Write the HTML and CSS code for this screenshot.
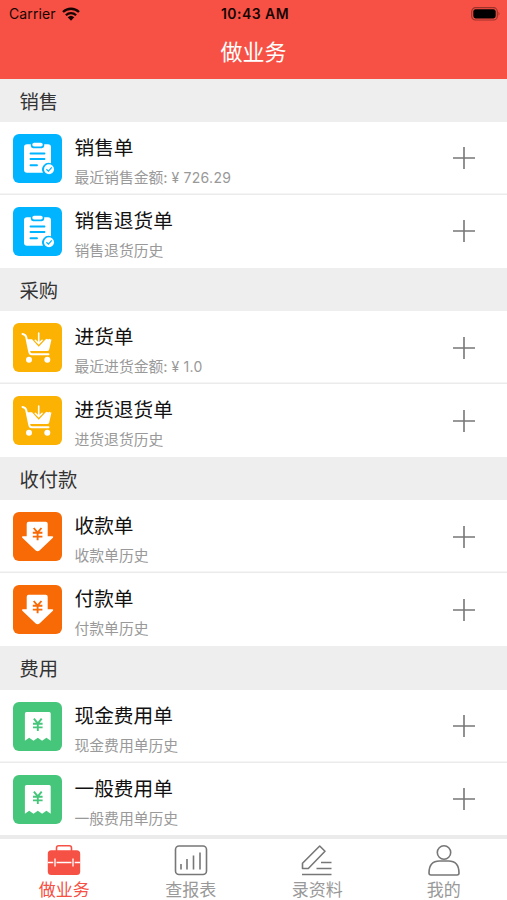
FILE: index.html
```
<!DOCTYPE html>
<html lang="zh-CN">
<head>
    <meta charset="UTF-8">
    <meta name="viewport" content="width=device-width, initial-scale=1.0">
    <title>做业务</title>
    <link rel="stylesheet" href="styles.css">
</head>
<body>
    <!-- shared icons -->
    <svg class="sprite" width="0" height="0">
        <symbol id="order" viewBox="0 0 49 49">
            <path fill="#fff" d="M14 10.3h3.800v1.500q0 2.400 2.400 2.400h8.600q2.400 0 2.400-2.400v-1.500H35q3 0 3 3V29.200a6.600 6.600 0 0 0-8 9.500H14q-3 0-3-3V13.300q0-3 3-3z"/>
            <rect x="19.300" y="8.800" width="10.400" height="3.700" rx="1.800" fill="#fff"/>
            <path d="M17.500 19.500h14M17.500 25h14M17.500 31.300h6.500" fill="none" stroke="#00b4ff" stroke-width="1.900" stroke-linecap="round"/>
            <circle cx="36" cy="35.200" r="5" fill="#fff"/>
            <path d="M33.400 35.200l2 1.900 3.400-3.700" fill="none" stroke="#00b4ff" stroke-width="1.200"/>
        </symbol>
        <symbol id="cart" viewBox="0 0 49 49">
            <path d="M9.500 11q3 .5 3.700 3l3 14.500q.5 2.700 2.500 2.700H35.500" fill="none" stroke="#fff" stroke-width="2" stroke-linecap="round"/>
            <path fill="#fff" d="M13.500 16.200h5.500l6.700 7.600 6.800-7.400 1.300-.7 1.300.8 1.300-.8 1 .8h1.100l-2.300 10q-.4 1.600-2 1.600H16z"/>
            <path d="M25.700 10v10M22.300 17.300l3.400 3.400 3.400-3.400" fill="none" stroke="#fff" stroke-width="1.600" stroke-linecap="round"/>
            <circle cx="16" cy="36.800" r="3" fill="#fff"/>
            <circle cx="34.300" cy="36.800" r="3" fill="#fff"/>
        </symbol>
        <symbol id="pay" viewBox="0 0 49 49">
            <path fill="#fff" d="M15.700 9.700h17q2 0 2 2V24.300h4.600q1.700.3.600 1.500L26.500 38.400q-1.900 1.500-3.800 0L9.300 25.800q-1.100-1.200.6-1.500h3.800V11.700q0-2 2-2z"/>
            <path d="M20.700 16l3.900 4.600 3.900-4.600M19.800 20.800h9.600M19.800 24.600h9.600M24.600 20.600v7.600" fill="none" stroke="#f86a05" stroke-width="1.900"/>
        </symbol>
        <symbol id="receipt" viewBox="0 0 49 49">
            <path fill="#fff" d="M13.500 10h22.700q1.500 0 1.500 1.500v27.300l-4.300-3-4.300 3-4.300-3-4.300 3-4.300-3-4.300 3V11.500q0-1.500 1.600-1.500z"/>
            <path d="M20.900 16.700l3.900 4.700 3.900-4.700M20 21.700h9.600M20 25.400h9.600M24.800 21.400v7.600" fill="none" stroke="#46c67b" stroke-width="1.900"/>
        </symbol>
        <symbol id="plus" viewBox="0 0 22 22">
            <path d="M0 11h22M11 0v22" stroke="#777" stroke-width="1.600"/>
        </symbol>
    </svg>

    <header class="header">
        <div class="status-bar">
            <div class="carrier">
                <span>Carrier</span>
                <svg class="wifi" viewBox="0 0 18 14">
                    <path d="M1 5a11.500 11.500 0 0 1 16 0M3.900 8.200a7.300 7.300 0 0 1 10.200 0" fill="none" stroke="#170504" stroke-width="2.300"/>
                    <path d="M5.700 10.200a4.800 4.800 0 0 1 6.600 0L9 13.700z" fill="#170504"/>
                </svg>
            </div>
            <span class="time">10:43 AM</span>
            <svg class="battery" viewBox="0 0 30 14">
                <rect x=".700" y=".700" width="25.600" height="12.300" rx="3.800" fill="none" stroke="#9c332b" stroke-width="1.200"/>
                <rect x="2.300" y="2.300" width="22.400" height="9.100" rx="2.300"/>
                <path d="M27.500 4.800q2 2 0 4z" fill="#9c332b"/>
            </svg>
        </div>
        <h1 class="title">做业务</h1>
    </header>

    <main class="list">
        <h2 class="section-title">销售</h2>
        <div class="item">
            <svg class="icon blue"><use href="#order"/></svg>
            <div class="info">
                <p class="name">销售单</p>
                <p class="desc">最近销售金额:<span class="amount"><span class="yen">¥</span>726.29</span></p>
            </div>
            <svg class="plus"><use href="#plus"/></svg>
        </div>
        <div class="item">
            <svg class="icon blue"><use href="#order"/></svg>
            <div class="info">
                <p class="name">销售退货单</p>
                <p class="desc">销售退货历史</p>
            </div>
            <svg class="plus"><use href="#plus"/></svg>
        </div>

        <h2 class="section-title">采购</h2>
        <div class="item">
            <svg class="icon yellow"><use href="#cart"/></svg>
            <div class="info">
                <p class="name">进货单</p>
                <p class="desc">最近进货金额:<span class="amount"><span class="yen">¥</span>1.0</span></p>
            </div>
            <svg class="plus"><use href="#plus"/></svg>
        </div>
        <div class="item">
            <svg class="icon yellow"><use href="#cart"/></svg>
            <div class="info">
                <p class="name">进货退货单</p>
                <p class="desc">进货退货历史</p>
            </div>
            <svg class="plus"><use href="#plus"/></svg>
        </div>

        <h2 class="section-title">收付款</h2>
        <div class="item">
            <svg class="icon orange"><use href="#pay"/></svg>
            <div class="info">
                <p class="name">收款单</p>
                <p class="desc">收款单历史</p>
            </div>
            <svg class="plus"><use href="#plus"/></svg>
        </div>
        <div class="item">
            <svg class="icon orange"><use href="#pay"/></svg>
            <div class="info">
                <p class="name">付款单</p>
                <p class="desc">付款单历史</p>
            </div>
            <svg class="plus"><use href="#plus"/></svg>
        </div>

        <h2 class="section-title">费用</h2>
        <div class="item">
            <svg class="icon green"><use href="#receipt"/></svg>
            <div class="info">
                <p class="name">现金费用单</p>
                <p class="desc">现金费用单历史</p>
            </div>
            <svg class="plus"><use href="#plus"/></svg>
        </div>
        <div class="item">
            <svg class="icon green"><use href="#receipt"/></svg>
            <div class="info">
                <p class="name">一般费用单</p>
                <p class="desc">一般费用单历史</p>
            </div>
            <svg class="plus"><use href="#plus"/></svg>
        </div>
    </main>

    <nav class="tab-bar">
        <div class="tab active">
            <svg class="tab-icon" viewBox="0 0 34 32">
                <path d="M9.500 7V4q0-2.200 2.200-2.200h10.600q2.200 0 2.200 2.200v3" fill="none" stroke="#f65145" stroke-width="1.600"/>
                <rect x=".800" y="6.300" width="32.400" height="24.700" rx="3.500" fill="#f65145"/>
                <path d="M.8 18.500h5.500M9.500 18.500h15M27.700 18.500h5.500M8 14.500v8M26 14.500v8" stroke="#fff" stroke-width="1.300"/>
            </svg>
            <span>做业务</span>
        </div>
        <div class="tab">
            <svg class="tab-icon" viewBox="0 0 34 32">
                <rect x="1.500" y="2" width="31" height="28.500" rx="3.500"/>
                <path d="M7 20v5.500M13 15v10.500M19.500 11.500v14M26 8.500v17"/>
            </svg>
            <span>查报表</span>
        </div>
        <div class="tab">
            <svg class="tab-icon" viewBox="0 0 34 32">
                <path d="M2.500 24.500v-5.300L19.700 2l5.300 5.300L8.300 24.500zM21 18.500h10.500M16.500 24.500h15M2 30.500h29.500"/>
            </svg>
            <span>录资料</span>
        </div>
        <div class="tab">
            <svg class="tab-icon" viewBox="0 0 34 32">
                <circle cx="17" cy="8.500" r="6.700"/>
                <path d="M4 31q-2 0-2-2 0-12 10.500-12h9Q32 17 32 29q0 2-2 2z"/>
            </svg>
            <span>我的</span>
        </div>
    </nav>
</body>
</html>
```
FILE: styles.css
```
* {
    box-sizing: border-box;
}

body {
    font-family: Inter, "Noto Sans CJK SC", sans-serif;
    margin: 0;
    height: 900px;
    display: flex;
    flex-direction: column;
    background-color: #fff;
    overflow: hidden;
}

h1, h2, p {
    margin: 0;
    font-weight: normal;
}

.sprite {
    position: absolute;
}

.header {
    flex: none;
    height: 78.5px;
    background-color: #f75145;
}

.status-bar {
    display: grid;
    grid-template-columns: 1fr auto 1fr;
    align-items: center;
    height: 27px;
    padding: 0 6px 0 9px;
    font-size: 14px;
    color: #170504;
}

.carrier {
    display: flex;
    align-items: center;
    gap: 6px;
    letter-spacing: 0.1px;
}

.wifi {
    width: 18px;
    height: 14px;
}

.time {
    font-weight: 600;
    font-size: 14px;
    letter-spacing: 0.45px;
}

.battery {
    width: 30px;
    height: 14px;
    justify-self: end;
}

.title {
    font-size: 22px;
    line-height: 50px;
    text-align: center;
    color: #fff;
}

.list {
    flex: none;
    height: 756.5px;
}

.section-title {
    height: 43.3px;
    padding: 2px 0 0 19.5px;
    font-size: 19.3px;
    line-height: 43px;
    color: #333;
    background-color: #eee;
}

.item {
    display: flex;
    align-items: center;
    height: 73px;
    padding: 0 32px 0 13px;
}

/* inset line, takes no height from the row */
.item:has(+ .item) {
    box-shadow: inset 0 -1.5px #ebebeb;
}

.icon {
    width: 49px;
    height: 49px;
    border-radius: 6px;
}

.blue {
    background-color: #00b4ff;
}

.yellow {
    background-color: #fbb203;
}

.orange {
    background-color: #f86a05;
}

.green {
    background-color: #46c67b;
}

.info {
    flex: 1;
    margin-left: 12.5px;
    padding-top: 7.2px;
}

.name {
    font-size: 19.7px;
    line-height: 28px;
    color: #111;
}

.desc {
    margin-top: 4px;
    font-size: 14.8px;
    line-height: 24px;
    color: #999;
}

.amount {
    font-size: 14px;
    letter-spacing: 0.3px;
}

.yen {
    margin: 0 4px;
}

.plus {
    width: 22px;
    height: 22px;
}

.tab-bar {
    flex: none;
    display: flex;
    height: 65px;
    padding-left: 1px;
    border-top: 4px solid #ebebeb;
    background-color: #fff;
}

.tab {
    flex: 1;
    display: flex;
    flex-direction: column;
    align-items: center;
    padding-top: 5px;
    font-size: 17px;
    line-height: 24px;
    color: #999;
}

.tab span {
    margin-top: 2px;
}

.tab.active {
    color: #f65145;
}

.tab-icon {
    flex: none;
    width: 34px;
    height: 32px;
    fill: none;
    stroke: #777;
    stroke-width: 1.6;
    stroke-linejoin: round;
}

.active .tab-icon {
    stroke: none;
}
```
